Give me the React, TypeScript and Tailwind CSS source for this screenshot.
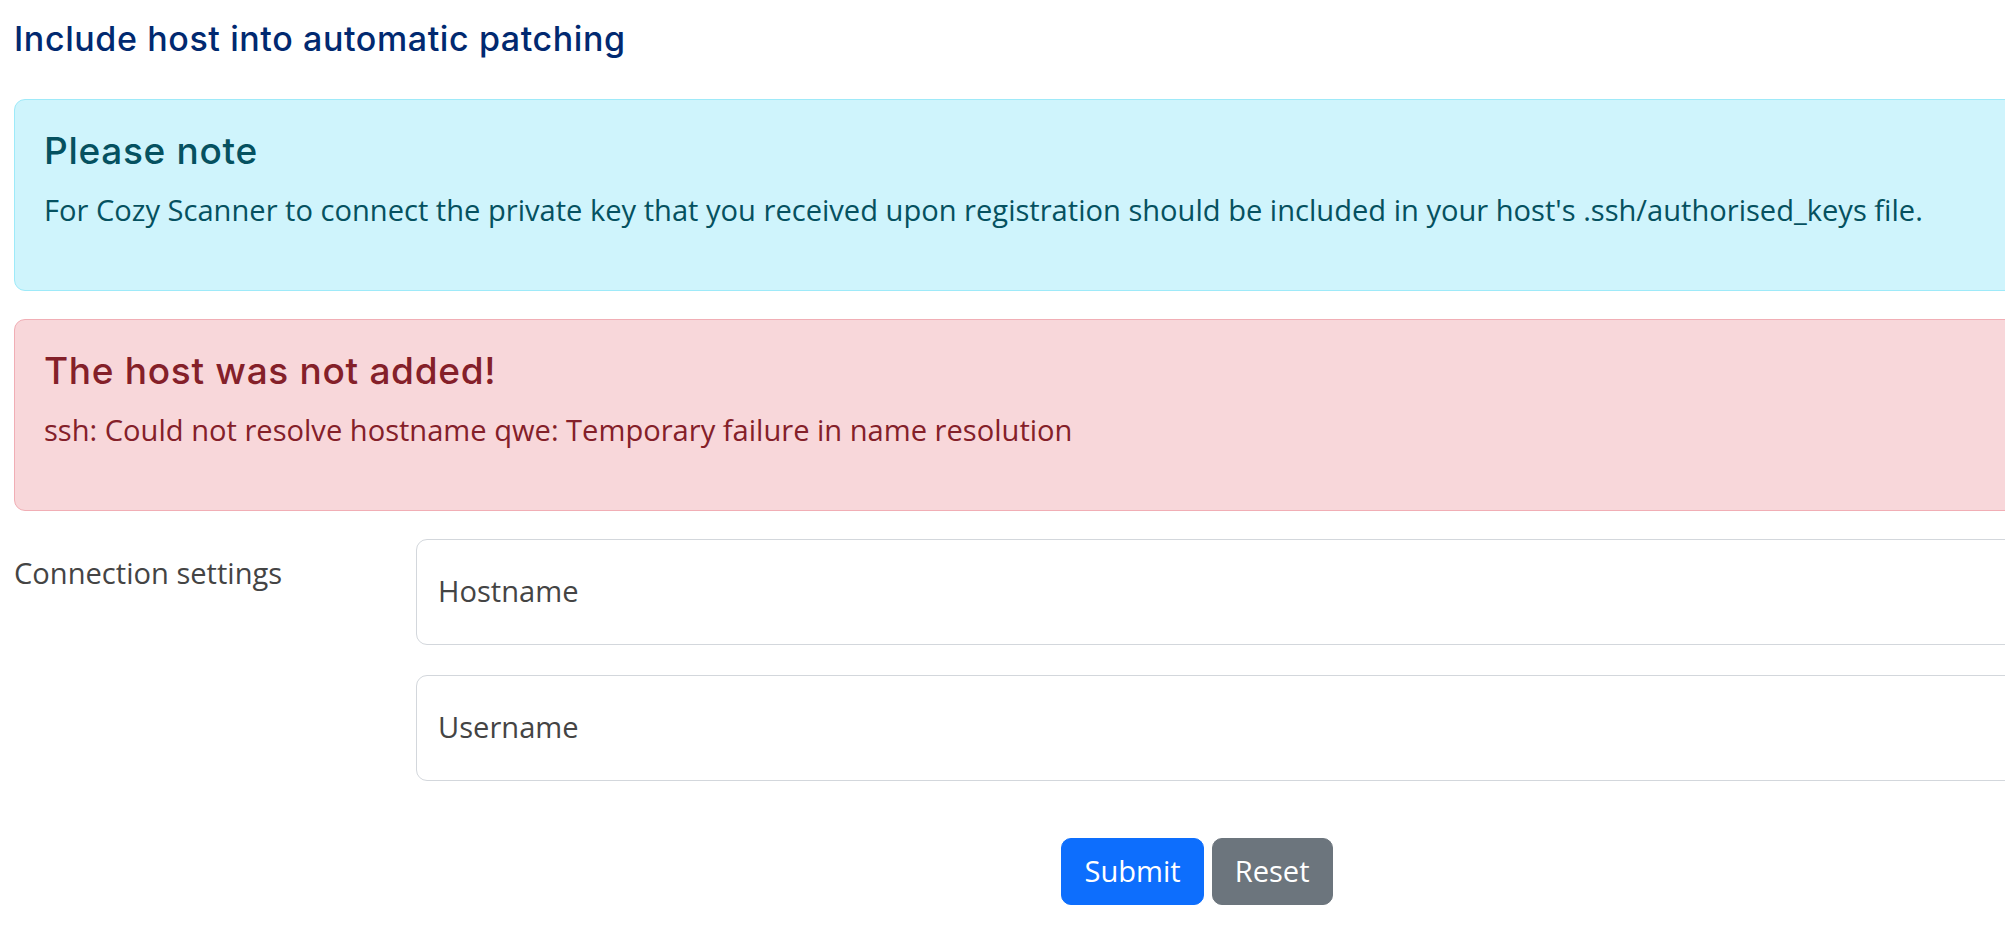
import React from "react";

const heading = { fontFamily: "Inter, 'Noto Sans', sans-serif" };
const body = { fontFamily: "'Open Sans', 'Noto Sans', sans-serif" };

export default function App() {
  return (
    <div className="w-screen overflow-hidden bg-white min-h-screen" style={body}>
      <div className="ml-[14px] w-[2366px]">
        <div
          className="pt-[19px] mb-[41px] text-[34px] leading-[39px] tracking-[0.6px] font-medium text-[#012970]"
          style={heading}
        >
          Include host into automatic patching
        </div>

        <div className="border border-[#9eeaf9] bg-[#cff4fc] text-[#055160] rounded-[11px] p-[29px]">
          <h4 className="text-[37px] leading-[43px] tracking-[0.7px] font-medium mb-[17px]" style={heading}>
            Please note
          </h4>
          <p className="text-[29.1px] leading-[43px] mb-[29px]">
            For Cozy Scanner to connect the private key that you received upon registration should be included in your host's .ssh/authorised_keys file.
          </p>
        </div>

        <div className="mt-[28px] border border-[#f1aeb5] bg-[#f8d7da] text-[#842029] rounded-[11px] p-[29px]">
          <h4 className="text-[37px] leading-[43px] tracking-[0.7px] font-medium mb-[17px]" style={heading}>
            The host was not added!
          </h4>
          <p className="text-[29.1px] leading-[43px] mb-[29px]">
            ssh: Could not resolve hostname qwe: Temporary failure in name resolution
          </p>
        </div>

        <div className="mt-[28px] flex">
          <div className="w-[402px] shrink-0 pt-[13px] text-[29.1px] leading-[43px] text-[#444444]">
            Connection settings
          </div>
          <div className="flex-1 flex flex-col gap-[30px]">
            <div className="h-[106px] border border-[#d3d7dc] rounded-[11px] bg-white px-[21px] pt-[30px] text-[29.1px] leading-[43px] text-[#444444]">
              Hostname
            </div>
            <div className="h-[106px] border border-[#d3d7dc] rounded-[11px] bg-white px-[21px] pt-[30px] text-[29.1px] leading-[43px] text-[#444444]">
              Username
            </div>
          </div>
        </div>

        <div className="mt-[57px] flex justify-center gap-[8px]">
          <button className="h-[67px] px-[22px] rounded-[10px] bg-[#0d6efd] text-white text-[29.1px] leading-[43px] border border-[#0d6efd]">
            Submit
          </button>
          <button className="h-[67px] px-[22px] rounded-[10px] bg-[#6c757d] text-white text-[29.1px] leading-[43px] border border-[#6c757d]">
            Reset
          </button>
        </div>
      </div>
    </div>
  );
}
